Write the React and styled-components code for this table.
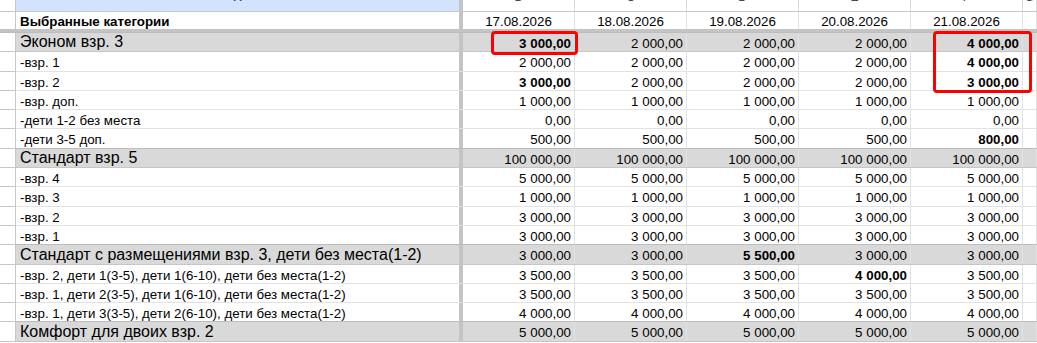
import React from 'react';
import styled, { createGlobalStyle } from 'styled-components';

const GlobalStyle = createGlobalStyle`
    html, body {
        margin: 0;
        padding: 0;
        background: #ffffff;
        overflow: hidden;
    }
    body {
        font-family: "Liberation Sans", Arial, sans-serif;
        color: #000000;
    }
`;

const COLS = '16px 447px repeat(5, 112px) 1fr';

const letters = ['A', 'B', 'C', 'D', 'E', 'F', 'G'];
const dates = ['17.08.2026', '18.08.2026', '19.08.2026', '20.08.2026', '21.08.2026'];

// "*" в конце значения — жирный шрифт
const rows = [
    { label: 'Эконом взр. 3', group: true, values: ['3 000,00*', '2 000,00', '2 000,00', '2 000,00', '4 000,00*'] },
    { label: '-взр. 1', values: ['2 000,00', '2 000,00', '2 000,00', '2 000,00', '4 000,00*'] },
    { label: '-взр. 2', values: ['3 000,00*', '2 000,00', '2 000,00', '2 000,00', '3 000,00*'] },
    { label: '-взр. доп.', values: ['1 000,00', '1 000,00', '1 000,00', '1 000,00', '1 000,00'] },
    { label: '-дети 1-2 без места', values: ['0,00', '0,00', '0,00', '0,00', '0,00'] },
    { label: '-дети 3-5 доп.', values: ['500,00', '500,00', '500,00', '500,00', '800,00*'] },
    { label: 'Стандарт взр. 5', group: true, values: ['100 000,00', '100 000,00', '100 000,00', '100 000,00', '100 000,00'] },
    { label: '-взр. 4', values: ['5 000,00', '5 000,00', '5 000,00', '5 000,00', '5 000,00'] },
    { label: '-взр. 3', values: ['1 000,00', '1 000,00', '1 000,00', '1 000,00', '1 000,00'] },
    { label: '-взр. 2', values: ['3 000,00', '3 000,00', '3 000,00', '3 000,00', '3 000,00'] },
    { label: '-взр. 1', values: ['3 000,00', '3 000,00', '3 000,00', '3 000,00', '3 000,00'] },
    { label: 'Стандарт с размещениями взр. 3, дети без места(1-2)', group: true, values: ['3 000,00', '3 000,00', '5 500,00*', '3 000,00', '3 000,00'] },
    { label: '-взр. 2, дети 1(3-5), дети 1(6-10), дети без места(1-2)', values: ['3 500,00', '3 500,00', '3 500,00', '4 000,00*', '3 500,00'] },
    { label: '-взр. 1, дети 2(3-5), дети 1(6-10), дети без места(1-2)', values: ['3 500,00', '3 500,00', '3 500,00', '3 500,00', '3 500,00'] },
    { label: '-взр. 1, дети 3(3-5), дети 2(6-10), дети без места(1-2)', values: ['4 000,00', '4 000,00', '4 000,00', '4 000,00', '4 000,00'] },
    { label: 'Комфорт для двоих взр. 2', group: true, values: ['5 000,00', '5 000,00', '5 000,00', '5 000,00', '5 000,00'] },
];

export default function App() {
    return (
        <>
            <GlobalStyle />
            <Sheet>
                <HeaderRow>
                    <Corner />
                    {letters.map((l, i) => (
                        <ColLetter key={l} $active={i === 0} $frozen={i === 0}>{l}</ColLetter>
                    ))}
                </HeaderRow>
                <TitleRow>
                    <RowHead />
                    <TitleCell>Выбранные категории</TitleCell>
                    {dates.map((d) => (
                        <DateCell key={d}>{d}</DateCell>
                    ))}
                    <DateCell />
                </TitleRow>
                {rows.map((r, i) => (
                    <Row key={i} $group={r.group}>
                        <RowHead />
                        <LabelCell $group={r.group}>{r.label}</LabelCell>
                        {r.values.map((v, j) => (
                            <NumCell key={j} $bold={v.endsWith('*')}>{v.replace('*', '')}</NumCell>
                        ))}
                        <NumCell />
                    </Row>
                ))}
                <Highlight style={{ left: 491, top: 31, width: 87, height: 24 }} />
                <Highlight style={{ left: 933, top: 31, width: 99, height: 62 }} />
            </Sheet>
        </>
    );
}

const Sheet = styled.div`
    position: relative;
    width: 1037px;
    height: 343px;
    overflow: hidden;
`;

const HeaderRow = styled.div`
    display: grid;
    grid-template-columns: ${COLS};
    height: 12px;
    box-sizing: border-box;
    border-bottom: 1px solid #c7c7c7;
`;

const Corner = styled.div`
    border-right: 1px solid #c7c7c7;
    background: #ffffff;
`;

const ColLetter = styled.div`
    display: flex;
    justify-content: center;
    align-items: flex-end;
    overflow: hidden;
    padding-bottom: 8px;
    font-size: 12px;
    line-height: 12px;
    color: ${({ $active }) => ($active ? '#0b57d0' : '#444746')};
    font-weight: ${({ $active }) => ($active ? 700 : 400)};
    background: ${({ $active }) => ($active ? '#d3e3fd' : '#ffffff')};
    border-right: ${({ $frozen }) => ($frozen ? '4px solid #c4c4c4' : '1px solid #dcdcdc')};
`;

const TitleRow = styled.div`
    display: grid;
    grid-template-columns: ${COLS};
    height: 21px;
    box-sizing: border-box;
    border-bottom: 4px solid #c4c4c4;
`;

const RowHead = styled.div`
    background: #ffffff;
    border-right: 1px solid #c7c7c7;
`;

const TitleCell = styled.div`
    display: flex;
    align-items: flex-end;
    padding: 0 0 1px 4px;
    font-size: 13.33px;
    line-height: 1;
    font-weight: 700;
    border-right: 4px solid #c4c4c4;
`;

const DateCell = styled.div`
    display: flex;
    justify-content: center;
    align-items: flex-end;
    padding-bottom: 1px;
    font-size: 13.33px;
    line-height: 1;
    border-right: 1px solid #e2e2e2;
`;

const Row = styled.div`
    display: grid;
    grid-template-columns: ${COLS};
    height: 19.31px;
    box-sizing: border-box;
    background: ${({ $group }) => ($group ? '#d9d9d9' : '#ffffff')};
    border-bottom: 1px solid ${({ $group }) => ($group ? '#c6c6c6' : '#e2e2e2')};
    box-shadow: ${({ $group }) => ($group ? '0 -1px 0 #bdbdbd' : 'none')};

    & > ${RowHead} {
        background: #ffffff;
        box-shadow: 0 1px 0 #c7c7c7;
    }
`;

const LabelCell = styled.div`
    display: flex;
    align-items: flex-end;
    padding: 0 0 1px 4px;
    font-size: ${({ $group }) => ($group ? '16px' : '13.33px')};
    line-height: 1;
    white-space: nowrap;
    border-right: 4px solid #c4c4c4;
`;

const NumCell = styled.div`
    display: flex;
    justify-content: flex-end;
    align-items: flex-end;
    padding: 0 3px 1px 0;
    font-size: 13.33px;
    line-height: 1;
    font-weight: ${({ $bold }) => ($bold ? 700 : 400)};
    border-right: 1px solid #e2e2e2;
`;

const Highlight = styled.div`
    position: absolute;
    box-sizing: border-box;
    border: 3px solid #ff0000;
    border-radius: 4px;
    pointer-events: none;
`;
